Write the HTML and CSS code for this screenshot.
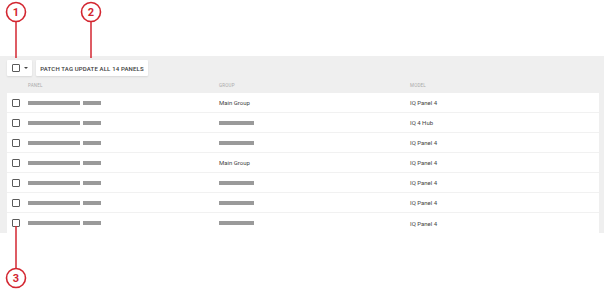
FILE: index.html
```
<!DOCTYPE html>
<html lang="en">
<head>
    <meta charset="UTF-8">
    <title>Panels</title>
    <link rel="stylesheet" href="styles.css">
</head>
<body>

<div class="page">
    <!-- Zona gris con barra de herramientas y tabla -->
    <div class="panel-area">
        <div class="toolbar">
            <button class="btn select-btn"><span class="box"></span><span class="caret"></span></button>
            <button class="btn patch-btn">PATCH TAG UPDATE ALL 14 PANELS</button>
        </div>

        <div class="grid head">
            <span></span>
            <span>PANEL</span>
            <span>GROUP</span>
            <span>MODEL</span>
        </div>

        <div class="table">
            <div class="grid row">
                <span class="box"></span>
                <span class="name"><i class="bar long"></i><i class="bar short"></i></span>
                <span>Main Group</span>
                <span>IQ Panel 4</span>
            </div>
            <div class="grid row">
                <span class="box"></span>
                <span class="name"><i class="bar long"></i><i class="bar short"></i></span>
                <span><i class="bar group"></i></span>
                <span>IQ 4 Hub</span>
            </div>
            <div class="grid row">
                <span class="box"></span>
                <span class="name"><i class="bar long"></i><i class="bar short"></i></span>
                <span><i class="bar group"></i></span>
                <span>IQ Panel 4</span>
            </div>
            <div class="grid row">
                <span class="box"></span>
                <span class="name"><i class="bar long"></i><i class="bar short"></i></span>
                <span>Main Group</span>
                <span>IQ Panel 4</span>
            </div>
            <div class="grid row">
                <span class="box"></span>
                <span class="name"><i class="bar long"></i><i class="bar short"></i></span>
                <span><i class="bar group"></i></span>
                <span>IQ Panel 4</span>
            </div>
            <div class="grid row">
                <span class="box"></span>
                <span class="name"><i class="bar long"></i><i class="bar short"></i></span>
                <span><i class="bar group"></i></span>
                <span>IQ Panel 4</span>
            </div>
            <div class="grid row">
                <span class="box"></span>
                <span class="name"><i class="bar long"></i><i class="bar short"></i></span>
                <span><i class="bar group"></i></span>
                <span>IQ Panel 4</span>
            </div>
        </div>
    </div>

    <!-- Llamadas numeradas encima de la captura -->
    <svg class="callouts" width="604" height="290" viewBox="0 0 604 290">
        <line x1="16" y1="21" x2="16" y2="58" />
        <line x1="91" y1="21" x2="91" y2="58" />
        <line x1="16" y1="226" x2="16" y2="269" />
        <circle cx="16" cy="12" r="9.5" />
        <circle cx="91" cy="12" r="9.5" />
        <circle cx="16" cy="278" r="9.5" />
        <text x="16" y="16">1</text>
        <text x="91" y="16">2</text>
        <text x="16" y="282">3</text>
    </svg>
</div>

</body>
</html>
```

FILE: styles.css
```
* {
    margin: 0;
    padding: 0;
    box-sizing: border-box;
}
body {
    font-family: 'Roboto', sans-serif;
    background-color: white;
    color: #333;
}
.page {
    position: relative;
    width: 604px;
    height: 290px;
    padding-top: 56px;
}
.panel-area {
    background-color: #efefef;
    padding: 4px 5px 0 7px;
}
.toolbar {
    display: flex;
    gap: 4px;
    height: 16px;
}
.btn {
    background-color: white;
    border: none;
    border-radius: 1px;
    box-shadow: 0 1px 2px rgba(0, 0, 0, 0.1);
    font-family: 'Roboto', sans-serif;
    display: flex;
    align-items: center;
}
.select-btn {
    width: 25px;
    padding-left: 5px;
    gap: 4px;
}
.caret {
    width: 0;
    height: 0;
    border-left: 2px solid transparent;
    border-right: 2px solid transparent;
    border-top: 2px solid #444;
}
.patch-btn {
    width: 112px;
    justify-content: center;
    font-size: 6px;
    font-weight: 500;
    color: #3a3a3a;
    letter-spacing: 0.15px;
}
.box {
    display: block;
    width: 8px;
    height: 8px;
    border: 1px solid #5a5a5a;
    border-radius: 1px;
}
.grid {
    display: grid;
    grid-template-columns: 21px 191px 191px 1fr;
    align-items: center;
}
.head {
    height: 17px;
    padding-top: 1px;
    font-size: 4.5px;
    color: #aaa;
    letter-spacing: 0.2px;
}
.table {
    background-color: white;
}
.row {
    height: 20px;
    border-bottom: 1px solid #f1f1f1;
    font-size: 6px;
    color: #444;
    padding-left: 5px;
    grid-template-columns: 16px 191px 191px 1fr;
}
.row:last-child {
    border-bottom: none;
}
.name {
    display: flex;
    gap: 3px;
}
.bar {
    display: block;
    height: 4px;
    background-color: #9a9a9a;
}
.long {
    width: 52px;
}
.short {
    width: 18px;
}
.group {
    width: 35px;
}
/* Llamadas rojas */
.callouts {
    position: absolute;
    top: 0;
    left: 0;
    pointer-events: none;
}
.callouts line {
    stroke: #d32630;
    stroke-width: 1.5;
}
.callouts circle {
    fill: white;
    stroke: #d32630;
    stroke-width: 1.6;
}
.callouts text {
    fill: #d32630;
    font-family: 'Roboto', sans-serif;
    font-weight: bold;
    font-size: 11px;
    text-anchor: middle;
}
```
